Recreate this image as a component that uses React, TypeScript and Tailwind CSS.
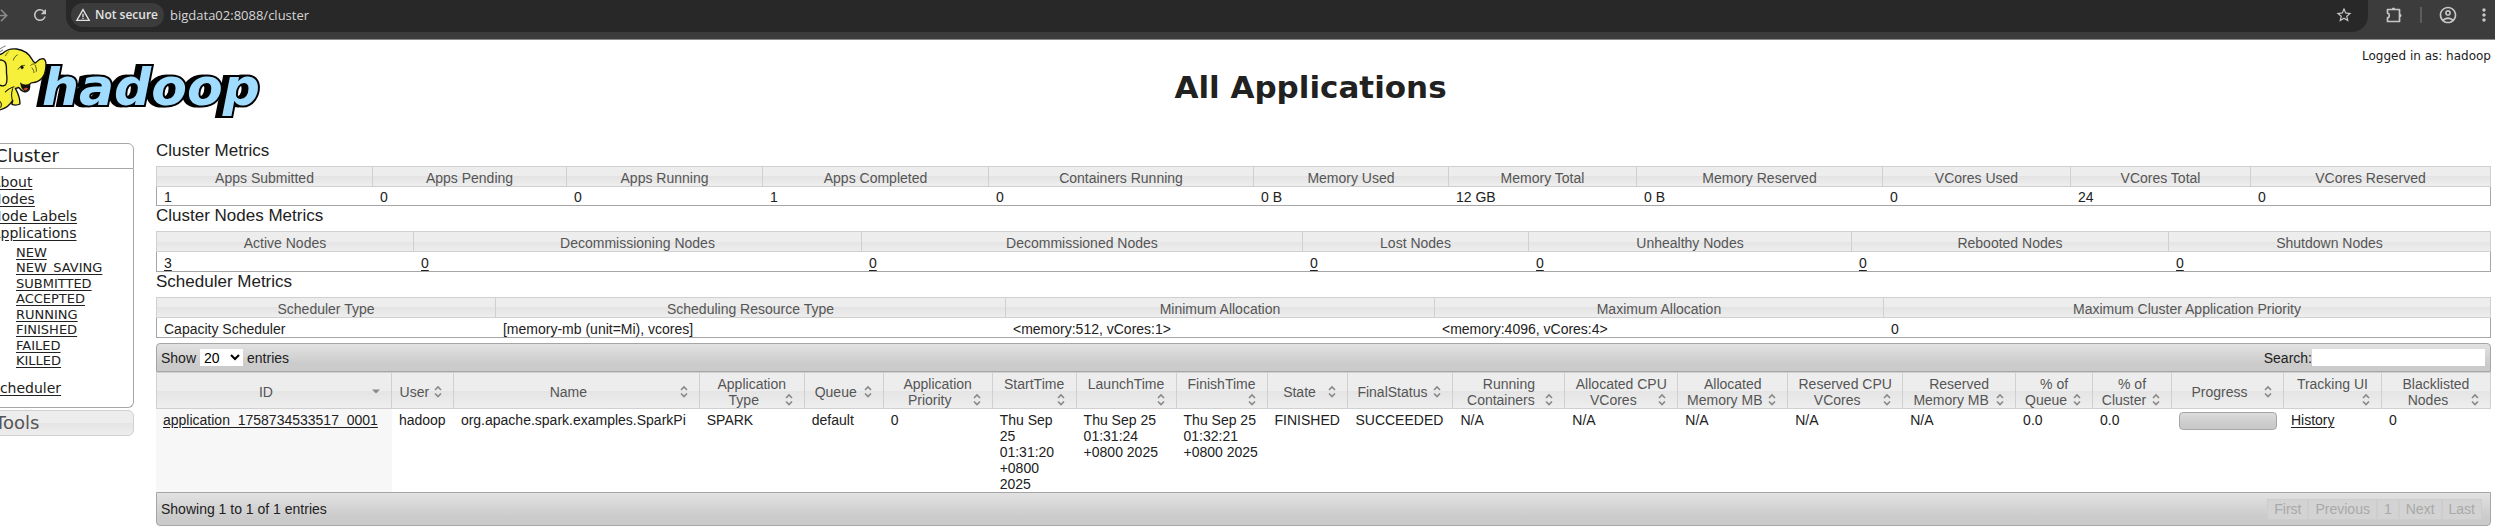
import type { ReactNode } from "react";
import {
  MdArrowForward,
  MdMoreVert,
  MdOutlineAccountCircle,
  MdRefresh,
  MdStarBorder,
  MdWarningAmber,
} from "react-icons/md";

type Column = { label: string; width: number; value: ReactNode };

const TH =
  "border-y border-r border-[#d0d0d0] font-normal text-[#555] first:border-l bg-linear-to-b from-[#ededed] from-50% via-[#e4e4e4] via-50% to-[#eeeeee]";
const BAR =
  "flex items-center justify-between border border-[#a6a6a6] bg-linear-to-b from-[#e2e2e2] to-[#cbcbcb] to-75%";

function Columns({ columns }: { columns: Column[] }) {
  const total = columns.reduce((sum, c) => sum + c.width, 0);
  return (
    <colgroup>
      {columns.map((c) => (
        <col key={c.label} style={{ width: `${(c.width / total) * 100}%` }} />
      ))}
    </colgroup>
  );
}

function Zero({ children = "0" }: { children?: ReactNode }) {
  return (
    <a href="#nodes" className="underline underline-offset-2">
      {children}
    </a>
  );
}

const clusterMetrics: Column[] = [
  { label: "Apps Submitted", width: 217, value: "1" },
  { label: "Apps Pending", width: 194, value: "0" },
  { label: "Apps Running", width: 196, value: "0" },
  { label: "Apps Completed", width: 226, value: "1" },
  { label: "Containers Running", width: 265, value: "0" },
  { label: "Memory Used", width: 195, value: "0 B" },
  { label: "Memory Total", width: 188, value: "12 GB" },
  { label: "Memory Reserved", width: 246, value: "0 B" },
  { label: "VCores Used", width: 188, value: "0" },
  { label: "VCores Total", width: 180, value: "24" },
  { label: "VCores Reserved", width: 240, value: "0" },
];

const nodeMetrics: Column[] = [
  { label: "Active Nodes", width: 258, value: <Zero>3</Zero> },
  { label: "Decommissioning Nodes", width: 448, value: <Zero /> },
  { label: "Decommissioned Nodes", width: 441, value: <Zero /> },
  { label: "Lost Nodes", width: 226, value: <Zero /> },
  { label: "Unhealthy Nodes", width: 323, value: <Zero /> },
  { label: "Rebooted Nodes", width: 317, value: <Zero /> },
  { label: "Shutdown Nodes", width: 322, value: <Zero /> },
];

const schedulerMetrics: Column[] = [
  { label: "Scheduler Type", width: 340, value: "Capacity Scheduler" },
  { label: "Scheduling Resource Type", width: 510, value: "[memory-mb (unit=Mi), vcores]" },
  { label: "Minimum Allocation", width: 429, value: "<memory:512, vCores:1>" },
  { label: "Maximum Allocation", width: 449, value: "<memory:4096, vCores:4>" },
  { label: "Maximum Cluster Application Priority", width: 607, value: "0" },
];

const appColumns: Column[] = [
  {
    label: "ID",
    width: 236,
    value: (
      <a href="#app" className="underline underline-offset-2">
        application_1758734533517_0001
      </a>
    ),
  },
  { label: "User", width: 62, value: "hadoop" },
  { label: "Name", width: 246, value: "org.apache.spark.examples.SparkPi" },
  { label: "Application Type", width: 105, value: "SPARK" },
  { label: "Queue", width: 79, value: "default" },
  { label: "Application Priority", width: 109, value: "0" },
  { label: "StartTime", width: 84, value: "Thu Sep 25 01:31:20 +0800 2025" },
  { label: "LaunchTime", width: 100, value: "Thu Sep 25 01:31:24 +0800 2025" },
  { label: "FinishTime", width: 91, value: "Thu Sep 25 01:32:21 +0800 2025" },
  { label: "State", width: 81, value: "FINISHED" },
  { label: "FinalStatus", width: 105, value: "SUCCEEDED" },
  { label: "Running Containers", width: 112, value: "N/A" },
  { label: "Allocated CPU VCores", width: 113, value: "N/A" },
  { label: "Allocated Memory MB", width: 110, value: "N/A" },
  { label: "Reserved CPU VCores", width: 115, value: "N/A" },
  { label: "Reserved Memory MB", width: 113, value: "N/A" },
  { label: "% of Queue", width: 77, value: "0.0" },
  { label: "% of Cluster", width: 79, value: "0.0" },
  {
    label: "Progress",
    width: 112,
    value: (
      <div
        role="progressbar"
        aria-label="Progress"
        aria-valuenow={100}
        className="h-[18px] rounded border border-[#a6a6a6] bg-linear-to-b from-[#dcdcdc] to-[#cacaca] to-75%"
      />
    ),
  },
  {
    label: "Tracking UI",
    width: 98,
    value: (
      <a href="#history" className="underline underline-offset-2">
        History
      </a>
    ),
  },
  { label: "Blacklisted Nodes", width: 109, value: "0" },
];

function Metrics({ title, columns, dense = false }: { title: string; columns: Column[]; dense?: boolean }) {
  return (
    <section>
      <h3 className="pb-[5px] text-[17px] leading-5">{title}</h3>
      <table className="w-full table-fixed border-separate border-spacing-0">
        <Columns columns={columns} />
        <thead>
          <tr>
            {columns.map((c) => (
              <th key={c.label} scope="col" className={`${TH} pt-[3px]`}>
                {c.label}
              </th>
            ))}
          </tr>
        </thead>
        <tbody>
          <tr>
            {columns.map((c) => (
              <td
                key={c.label}
                className={`border-b border-[#a6a6a6] pl-[7px] first:border-l last:border-r ${dense ? "pt-[2px]" : "pt-[3px]"}`}
              >
                {c.value}
              </td>
            ))}
          </tr>
        </tbody>
      </table>
    </section>
  );
}

function SortIcon({ sorted }: { sorted: boolean }) {
  return (
    <svg viewBox="0 0 16 16" className="float-right size-4" aria-hidden="true">
      {sorted ? (
        <path d="M4 5.5h8l-4 4z" fill="#888" />
      ) : (
        <path d="M5 6 8 3l3 3M5 9.5l3 3 3-3" fill="none" stroke="#888" strokeWidth="1.6" />
      )}
    </svg>
  );
}

function BrowserBar() {
  return (
    <div className="flex h-10 items-start border-b border-[#8a8a8a] bg-[#3c3c3c] text-[#c7c7c7]">
      <div className="flex h-[30px] w-[66px] shrink-0 items-center">
        <button aria-label="Forward" className="-ml-2 text-[#8a8a8a]">
          <MdArrowForward size={19} />
        </button>
        <button aria-label="Reload" className="ml-5">
          <MdRefresh size={18} />
        </button>
      </div>
      <div className="flex h-8 grow items-start rounded-b-2xl bg-[#282828] pl-[5px]">
        <button className="mt-[3px] flex h-6 items-center gap-1 rounded-full bg-[#3c3c3c] pr-[6px] pl-1 font-['Open_Sans',sans-serif] text-[12px] font-semibold text-[#e3e3e3]">
          <MdWarningAmber size={16} />
          Not secure
        </button>
        <input
          aria-label="Address"
          defaultValue="bigdata02:8088/cluster"
          className="ml-[6px] h-[30px] grow font-['Open_Sans',sans-serif] text-[13px] text-[#d6d6d6] outline-none"
        />
        <button aria-label="Bookmark" className="mt-[6px] mr-[15px]">
          <MdStarBorder size={18} />
        </button>
      </div>
      <div className="flex h-[30px] w-[127px] shrink-0 items-center pl-[17px]">
        <button aria-label="Extensions">
          <svg viewBox="0 0 18 18" className="size-[18px]" fill="none" stroke="currentColor" strokeWidth="1.7">
            <path d="M2.5 3.5h12v12h-12v-3.6c2.4-.4 2.4-4.4 0-4.8z" strokeLinejoin="round" />
            <path d="M6.8 3.2a1.7 1.7 0 0 1 3.4 0zM14.8 7.8a1.7 1.7 0 0 1 0 3.4z" fill="currentColor" stroke="none" />
          </svg>
        </button>
        <span className="ml-[17px] h-4 w-0.5 bg-[#5c5c5c]" />
        <button aria-label="Profile" className="ml-4">
          <MdOutlineAccountCircle size={20} />
        </button>
        <button aria-label="Menu" className="ml-4">
          <MdMoreVert size={20} />
        </button>
      </div>
    </div>
  );
}

function HadoopLogo() {
  return (
    <svg viewBox="0 0 270 80" className="h-20 w-[270px]" role="img" aria-label="hadoop">
      <text
        x="42"
        y="63"
        fontFamily="DejaVu Sans"
        fontWeight="bold"
        fontStyle="italic"
        fontSize="52"
        fill="#a0dcff"
        stroke="#000"
        strokeWidth="4"
        paintOrder="stroke"
        className="drop-shadow-[-5px_0_0_#000]"
      >
        hadoop
      </text>
      <g transform="scale(0.3334)" stroke="#111" strokeWidth="4" strokeLinejoin="round" strokeLinecap="round">
        <path
          d="M-6 40 8 34C20 22 34 19 50 21c22 3 38 16 46 31 2 5 6 10 10 11 5-2 8-13 22-13 10 1 11 14 9 30-2 24-17 40-39 42-8 1-10 5-9 12 0 12-10 18-19 14-8-3-11-8-14-12-3 3-6 3-10 3 8 14 14 30 14 47-8 4-16 4-24 1l2-12c-8 14-22 26-44 30z"
          fill="#f6f03a"
        />
        <path d="M-6 58c6-6 16-5 21 2 7 10 3 24 5 38 2 16 2 30-8 33-6 2-12-1-18-4z" fill="#fbf75c" />
        <path d="M40 54c2-7 6-12 12-15M17 41c2-5 4-8 8-11" fill="none" strokeWidth="2" />
        <path d="M42 134c-12 4-20 8-26 16M38 140c-4 12-4 26 0 38M-4 176c8 4 10 12 6 20" fill="none" strokeWidth="3" />
        <path d="M62 124c8 6 18 6 26 2 2 10-2 21-12 21-8-1-13-12-14-23z" fill="#111" strokeWidth="2" />
        <path d="M70 142c4-5 10-6 14-3-3 6-8 7-14 3z" fill="#e33b32" stroke="none" />
        <path d="M54 82c4-8 12-13 20-12M92 70c4-4 8-5 12-4M96 78c4 5 6 9 6 14M106 70c2 6 4 12 3 18" fill="none" strokeWidth="2" />
        <ellipse cx="66" cy="76" rx="4" ry="5" fill="#111" strokeWidth="1" />
        <path d="M-4 24C4 17 10 14 16 12M-4 34C0 29 4 26 8 24" fill="none" stroke="#888" strokeWidth="3" />
      </g>
    </svg>
  );
}

const states = ["NEW", "NEW_SAVING", "SUBMITTED", "ACCEPTED", "RUNNING", "FINISHED", "FAILED", "KILLED"];

function Sidebar() {
  return (
    <nav className="-ml-5 w-[154px] shrink-0 pt-[2px] font-['DejaVu_Sans',sans-serif]">
      <h3 className="rounded-tr-md border border-[#a6a6a6] pl-[14px] text-[18px] leading-6">Cluster</h3>
      <div className="rounded-br-md border border-t-0 border-[#a6a6a6] pt-[5px] pb-[10px] pl-[10px] text-[14px] leading-[17px]">
        <ul>
          {["About", "Nodes", "Node Labels", "Applications"].map((item) => (
            <li key={item}>
              <a href="#cluster" className="underline underline-offset-2">{item}</a>
            </li>
          ))}
        </ul>
        <ul className="flex h-[135px] flex-col justify-between pt-[3px] pb-[9px] pl-[25px] text-[13px] leading-[15px]">
          {states.map((item) => (
            <li key={item}>
              <a href="#apps" className="underline underline-offset-2">{item}</a>
            </li>
          ))}
        </ul>
        <a href="#scheduler" className="mt-[3px] block underline underline-offset-2">Scheduler</a>
      </div>
      <h3 className="mt-[2px] rounded-r-md border border-[#d0d0d0] bg-linear-to-b from-[#ededed] from-50% via-[#e4e4e4] via-50% to-[#eeeeee] pl-[14px] text-[18px] leading-6 text-[#555]">
        Tools
      </h3>
    </nav>
  );
}

function Applications() {
  return (
    <section className="mt-[5px]">
      <div className={`${BAR} h-[29px] rounded-t pr-[5px] pl-1`}>
        <label className="flex items-center gap-1">
          Show
          <select className="h-[17px] w-[43px] bg-white text-black" defaultValue="20">
            <option>20</option>
            <option>50</option>
          </select>
          entries
        </label>
        <label className="flex items-center">
          Search:
          <input type="search" className="h-[17px] w-[173px] bg-white" />
        </label>
      </div>
      <table className="w-full table-fixed border-separate border-spacing-0">
        <Columns columns={appColumns} />
        <thead>
          <tr>
            {appColumns.map((c, i) => (
              <th key={c.label} scope="col" className={`${TH} px-[7px] pt-[3px]`}>
                {c.label}
                <SortIcon sorted={i === 0} />
              </th>
            ))}
          </tr>
        </thead>
        <tbody>
          <tr>
            {appColumns.map((c) => (
              <td key={c.label} className="px-[7px] pt-[3px] align-top first:bg-[#f7f7f7]">
                {c.value}
              </td>
            ))}
          </tr>
        </tbody>
      </table>
      <div className={`${BAR} h-[34px] rounded-b pr-2 pl-1`}>
        <span>Showing 1 to 1 of 1 entries</span>
        <div className="flex text-[#a9a9a9]">
          {["First", "Previous", "1", "Next", "Last"].map((item) => (
            <button
              key={item}
              disabled
              className="h-[21px] border border-[#cdcdcd] bg-[#d3d3d3] px-[6px]"
            >
              {item}
            </button>
          ))}
        </div>
      </div>
    </section>
  );
}

export default function App() {
  return (
    <div className="overflow-hidden bg-white font-['Liberation_Sans',Arial,sans-serif] text-[14px] leading-4 text-[#212121]">
      <BrowserBar />
      <header className="flex h-[101px] items-start pt-[2px] font-['DejaVu_Sans',sans-serif]">
        <HadoopLogo />
        <h1 className="grow pt-[25px] pl-[72px] text-center text-[31px] leading-10 font-bold">All Applications</h1>
        <p className="w-[216px] pt-[6px] pr-1 text-right text-[12px]">Logged in as: hadoop</p>
      </header>
      <div className="flex items-start gap-[22px] pr-1">
        <Sidebar />
        <main className="min-w-0 grow">
          <Metrics title="Cluster Metrics" columns={clusterMetrics} dense />
          <Metrics title="Cluster Nodes Metrics" columns={nodeMetrics} />
          <Metrics title="Scheduler Metrics" columns={schedulerMetrics} />
          <Applications />
        </main>
      </div>
    </div>
  );
}
